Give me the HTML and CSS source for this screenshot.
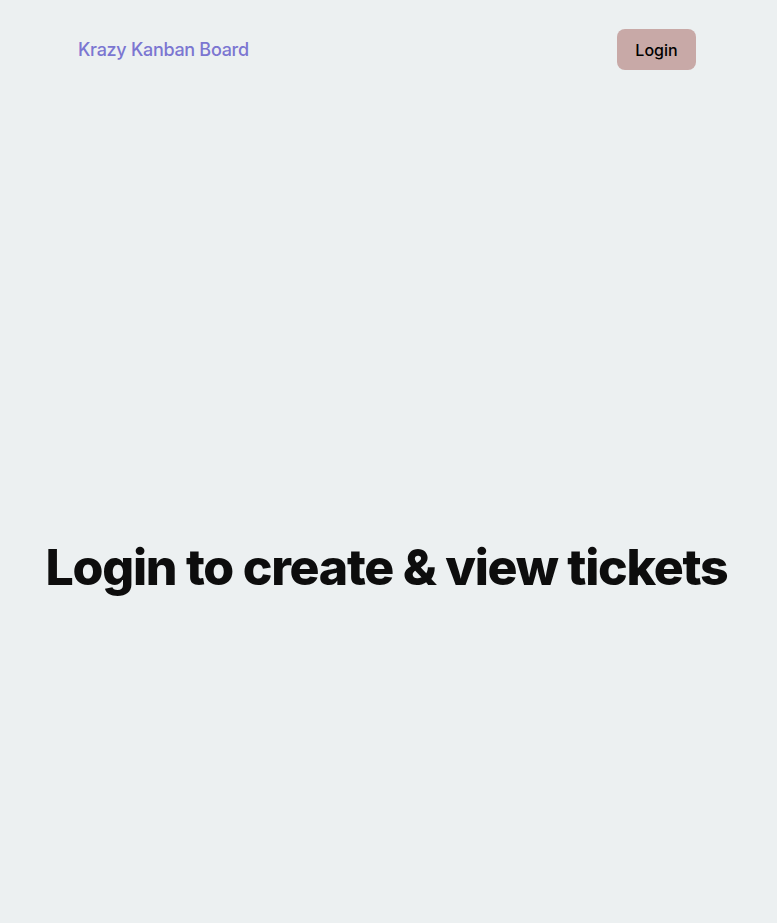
FILE: index.html
```html
<!DOCTYPE html>
<html>
<head>
<meta charset="utf-8">
<link rel="stylesheet" href="styles.css">
</head>
<body>
<header class="nav">
  <a class="brand" href="#">Krazy Kanban Board</a>
  <button class="login-btn">Login</button>
</header>
<main class="main">
  <h1 class="headline">Login to create &amp; view tickets</h1>
</main>
</body>
</html>
```
FILE: styles.css
```css
html, body {
  margin: 0;
  padding: 0;
}
body {
  background: #ecf0f1;
  font-family: Inter, "Noto Sans", sans-serif;
  min-height: 923px;
}
.nav {
  display: flex;
  justify-content: space-between;
  align-items: center;
  padding: 29px 81px 0 78px;
  height: 41px;
}
.brand {
  color: #7b76d1;
  font-size: 18px;
  font-weight: 500;
  letter-spacing: -0.3px;
  text-decoration: none;
}
.login-btn {
  background: #c8a9a7;
  border: none;
  border-radius: 8px;
  width: 79px;
  height: 41px;
  font-family: Inter, sans-serif;
  font-size: 16px;
  font-weight: 500;
  color: #000;
  padding: 0;
}
.main {
  display: flex;
  justify-content: center;
  padding: 467px 4px 0 0;
}
.headline {
  margin: 0;
  font-size: 50px;
  font-weight: 800;
  color: #0d0d0d;
  line-height: 1.2;
  letter-spacing: -1.27px;
}
```
